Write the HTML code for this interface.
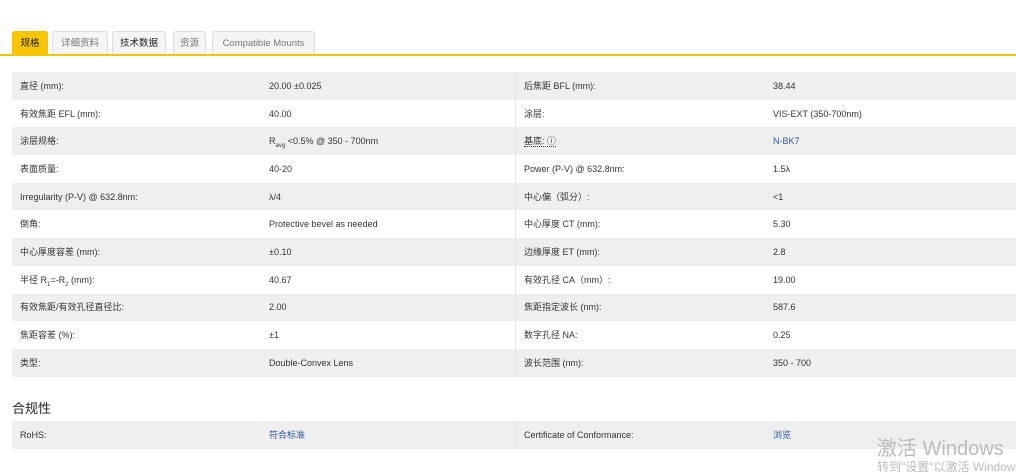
<!DOCTYPE html><html><head><meta charset="utf-8"><style>
body{margin:0;background:#fff;font-family:"Liberation Sans","Noto Sans CJK SC",sans-serif;font-size:9px;color:#333;width:1016px;height:471px;overflow:hidden;position:relative}
.tab{position:absolute;top:31px;height:23px;line-height:24px;border:1px solid #ddd;border-bottom:none;background:#f5f5f5;border-radius:3px 3px 0 0;text-align:center;color:#777;font-size:9.5px}
.line{position:absolute;top:54px;left:0;width:1016px;height:2px;background:#f2c500}
table{position:absolute;left:12px;border-collapse:collapse;width:1004px}
td{height:27.7px;padding:0 0 0 8px;font-size:9px;color:#333;white-space:nowrap;line-height:12px}
tr.g td{background:#efefef}
td.c1{width:241px}td.c2{width:246px;border-right:1px solid #e4e4e4}td.c3{width:241px}
a{color:#2a5aa8;text-decoration:none}
sub{font-size:6px;line-height:0}
</style></head><body>
<div class="tab" style="left:12px;width:34px;background:#f7c600;border-color:#f7c600;color:#222">规格</div>
<div class="tab" style="left:52px;width:54px">详细资料</div>
<div class="tab" style="left:112px;width:52px;color:#222">技术数据</div>
<div class="tab" style="left:173px;width:31px">资源</div>
<div class="tab" style="left:212px;width:101px">Compatible Mounts</div>
<div class="line"></div>
<table style="top:72px">
<tr class="g"><td class="c1">直径 (mm):</td><td class="c2">20.00 ±0.025</td><td class="c3">后焦距 BFL (mm):</td><td>38.44</td></tr>
<tr><td class="c1">有效焦距 EFL (mm):</td><td class="c2">40.00</td><td class="c3">涂层:</td><td>VIS-EXT (350-700nm)</td></tr>
<tr class="g"><td class="c1">涂层规格:</td><td class="c2">R<sub>avg</sub> &lt;0.5% @ 350 - 700nm</td><td class="c3"><span style="border-bottom:1px dotted #333">基底: ⓘ</span></td><td><a>N-BK7</a></td></tr>
<tr><td class="c1">表面质量:</td><td class="c2">40-20</td><td class="c3">Power (P-V) @ 632.8nm:</td><td>1.5λ</td></tr>
<tr class="g"><td class="c1">Irregularity (P-V) @ 632.8nm:</td><td class="c2">λ/4</td><td class="c3">中心偏（弧分）:</td><td>&lt;1</td></tr>
<tr><td class="c1">倒角:</td><td class="c2">Protective bevel as needed</td><td class="c3">中心厚度 CT (mm):</td><td>5.30</td></tr>
<tr class="g"><td class="c1">中心厚度容差 (mm):</td><td class="c2">±0.10</td><td class="c3">边缘厚度 ET (mm):</td><td>2.8</td></tr>
<tr><td class="c1">半径 R<sub>1</sub>=-R<sub>2</sub> (mm):</td><td class="c2">40.67</td><td class="c3">有效孔径 CA（mm）:</td><td>19.00</td></tr>
<tr class="g"><td class="c1">有效焦距/有效孔径直径比:</td><td class="c2">2.00</td><td class="c3">焦距指定波长 (nm):</td><td>587.6</td></tr>
<tr><td class="c1">焦距容差 (%):</td><td class="c2">±1</td><td class="c3">数字孔径 NA:</td><td>0.25</td></tr>
<tr class="g"><td class="c1">类型:</td><td class="c2">Double-Convex Lens</td><td class="c3">波长范围 (nm):</td><td>350 - 700</td></tr>
</table>
<div style="position:absolute;left:12px;top:398px;font-size:13px;color:#222">合规性</div>
<table style="top:421px">
<tr class="g"><td class="c1">RoHS:</td><td class="c2"><a>符合标准</a></td><td class="c3">Certificate of Conformance:</td><td><a>浏览</a></td></tr>
</table>
<div style="position:absolute;left:877px;top:432px;font-size:20px;color:#bbb">激活 Windows</div>
<div style="position:absolute;left:877px;top:458px;font-size:12px;color:#bbb;white-space:nowrap">转到"设置"以激活 Windows</div>
</body></html>
